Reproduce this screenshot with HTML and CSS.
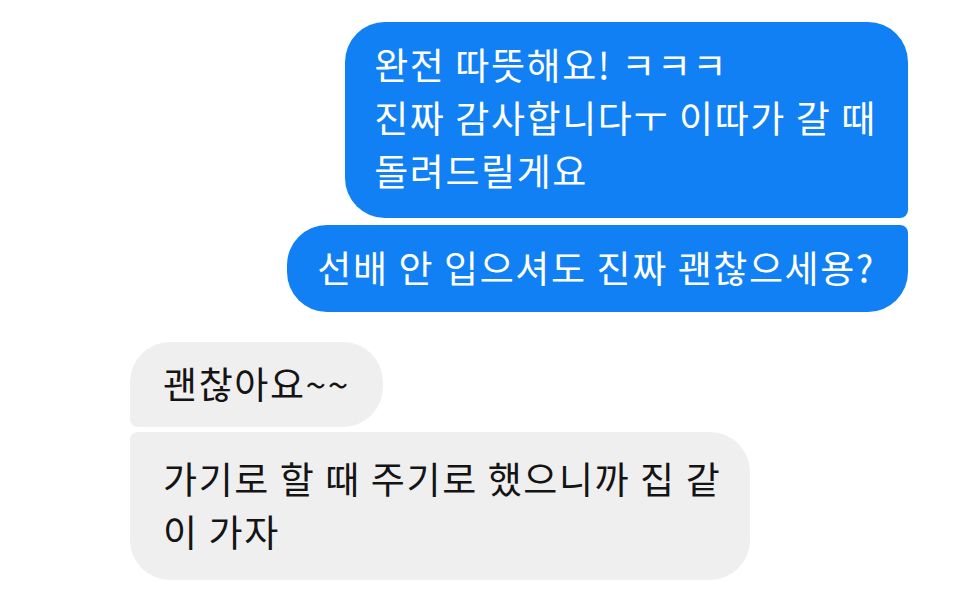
FILE: index.html
```html
<!DOCTYPE html>
<html>
<head>
	<meta charset="UTF-8">
	<title>Chat</title>
	<link rel="stylesheet" href="styles.css">
</head>
<body>
<div class="chat">
	<div class="msg mine first">완전 따뜻해요! ㅋㅋㅋ<br>진짜 감사합니다ㅜ 이따가 갈 때<br>돌려드릴게요</div>
	<div class="msg mine last">선배 안 입으셔도 진짜 괜찮으세용?</div>
	<div class="msg theirs first">괜찮아요~~</div>
	<div class="msg theirs last">가기로 할 때 주기로 했으니까 집 같<br>이 가자</div>
</div>
</body>
</html>
```

FILE: styles.css
```css
*{
	box-sizing: border-box;
}
body{
	margin: 0;
	background-color: #ffffff;
	font-family: "Noto Sans CJK KR", "Noto Sans", sans-serif;
}
.chat{
	display: flex;
	flex-direction: column;
	padding-top: 22px;
}
.msg{
	font-size: 37px;
	line-height: 53px;
	letter-spacing: 1.6px;
	padding: 17px 31px 19px 29px;
	border-radius: 40px;
}
.mine{
	align-self: flex-end;
	margin-right: 52px;
	background-color: #1080f4;
	color: #ffffff;
}
.mine.first{
	border-bottom-right-radius: 8px;
	padding-top: 16px;
	padding-bottom: 21px;
}
.mine.last{
	margin-top: 7px;
	border-top-right-radius: 8px;
	padding: 16px 33px 18px 30px;
}
.theirs{
	align-self: flex-start;
	margin-left: 130px;
	background-color: #efefef;
	color: #141414;
	padding-left: 33px;
	padding-right: 29px;
}
.theirs.first{
	margin-top: 30px;
	border-bottom-left-radius: 8px;
	padding-top: 15px;
	padding-bottom: 17px;
	padding-right: 33px;
}
.theirs.last{
	margin-top: 5px;
	border-top-left-radius: 8px;
	padding-top: 20px;
	padding-bottom: 22px;
}
```
